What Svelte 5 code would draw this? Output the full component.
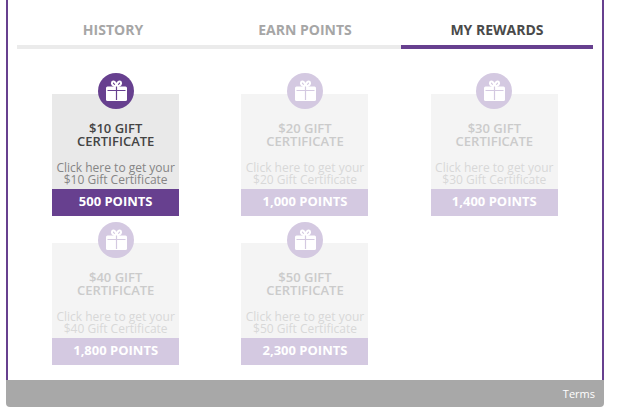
<script>
  const tabs = ['History', 'Earn Points', 'My Rewards'];
  let activeTab = $state('My Rewards');

  let balance = 500; // Points the member can spend

  const rewards = [
    { value: '$10', points: 500 },
    { value: '$20', points: 1000 },
    { value: '$30', points: 1400 },
    { value: '$40', points: 1800 },
    { value: '$50', points: 2300 },
  ];
</script>

<main>
  <div class="panel">
    <nav class="tabs">
      {#each tabs as tab}
        <button class="tab" class:active={tab === activeTab} onclick={() => (activeTab = tab)}>{tab}</button>
      {/each}
    </nav>

    <div class="rewards">
      {#each rewards as reward}
        <button class="reward" disabled={reward.points > balance}>
          <span class="badge">
            <svg viewBox="0 0 36 36" width="36" height="36" aria-hidden="true">
              <circle class="disc" cx="18" cy="18" r="18" />
              <rect class="gift" x="8" y="13.5" width="21" height="14.5" rx="1.5" />
              <path class="bow" d="M18.5 13.5C14.5 13 13.4 10.8 14.1 9.3C15.2 7.2 18 8.8 18.5 13.5C19 8.8 21.8 7.2 22.9 9.3C23.6 10.8 22.5 13 18.5 13.5Z" />
              <path class="ribbon" d="M9.5 17.5H27.5M18.5 13.5V27" />
            </svg>
          </span>
          <span class="body">
            <span class="title">{reward.value} Gift Certificate</span>
            <span class="text">Click here to get your {reward.value} Gift Certificate</span>
          </span>
          <span class="points">{reward.points.toLocaleString('en-US')} Points</span>
        </button>
      {/each}
    </div>
  </div>

  <footer>
    <a href="#terms">Terms</a>
  </footer>
</main>

<style>
  :global(body) {
    background: #fff;
  }

  main {
    margin: 0 32px 0 6px;
    font-family: 'Open Sans', 'Noto Sans', sans-serif;
  }

  .panel {
    padding: 0 9px 15px;
    border: 2px solid #67408f;
    border-top: none;
    border-bottom: none;
  }

  .tabs {
    display: grid;
    grid-template-columns: repeat(3, 1fr);
    margin: 0 0 24px;
  }

  .tab {
    height: 49px;
    padding: 15px 0 0;
    border: none;
    border-bottom: 4px solid #ebebeb;
    background: none;
    color: #a6a6a6;
    font-family: inherit;
    font-size: 14px;
    font-weight: 700;
    line-height: 20px;
    text-transform: uppercase;
    cursor: pointer;
  }

  .tab.active {
    border-color: #67408f;
    color: #4a4a4a;
  }

  .rewards {
    display: grid;
    grid-template-columns: repeat(3, 1fr);
    justify-items: center;
    row-gap: 6px;
    padding: 0 4px;
  }

  .reward {
    display: flex;
    flex-direction: column;
    align-items: center;
    width: 127px;
    padding: 0;
    border: none;
    background: none;
    font-family: inherit;
    text-align: center;
    cursor: pointer;
  }

  .reward:disabled {
    cursor: default;
  }

  .badge {
    position: relative;
    height: 36px;
    margin-bottom: -15px;
  }

  .badge svg {
    display: block;
  }

  .disc {
    fill: #67408f;
  }

  .gift {
    fill: #fff;
  }

  .bow {
    fill: none;
    stroke: #fff;
    stroke-width: 2;
  }

  .ribbon {
    fill: none;
    stroke: #67408f;
    stroke-width: 1.2;
  }

  .body {
    display: flex;
    flex-direction: column;
    gap: 14px;
    width: 100%;
    height: 95px;
    padding: 28px 4px 0;
    box-sizing: border-box;
    background: #e9e9e9;
  }

  .title {
    padding: 0 16px;
    color: #444;
    font-size: 13px;
    font-weight: 600;
    line-height: 13px;
    text-transform: uppercase;
  }

  .text {
    color: #858585;
    font-size: 12px;
    line-height: 12px;
  }

  .points {
    width: 100%;
    padding-bottom: 2px;
    background: #67408f;
    color: #fff;
    font-size: 13px;
    font-weight: 700;
    line-height: 25px;
    text-transform: uppercase;
  }

  /* Rewards the member cannot afford yet */
  .reward:disabled .disc {
    fill: #d4c9e1;
  }

  .reward:disabled .ribbon {
    stroke: #d4c9e1;
  }

  .reward:disabled .body {
    background: #f4f4f4;
  }

  .reward:disabled .title {
    color: #cbcbcb;
  }

  .reward:disabled .text {
    color: #d8d8d8;
  }

  .reward:disabled .points {
    background: #d4c9e1;
  }

  footer {
    padding: 0 9px;
    border-radius: 0 0 4px 4px;
    background: #a8a8a8;
    font-size: 11px;
    line-height: 27px;
    text-align: right;
  }

  footer a {
    color: #fff;
    text-decoration: none;
  }
</style>
